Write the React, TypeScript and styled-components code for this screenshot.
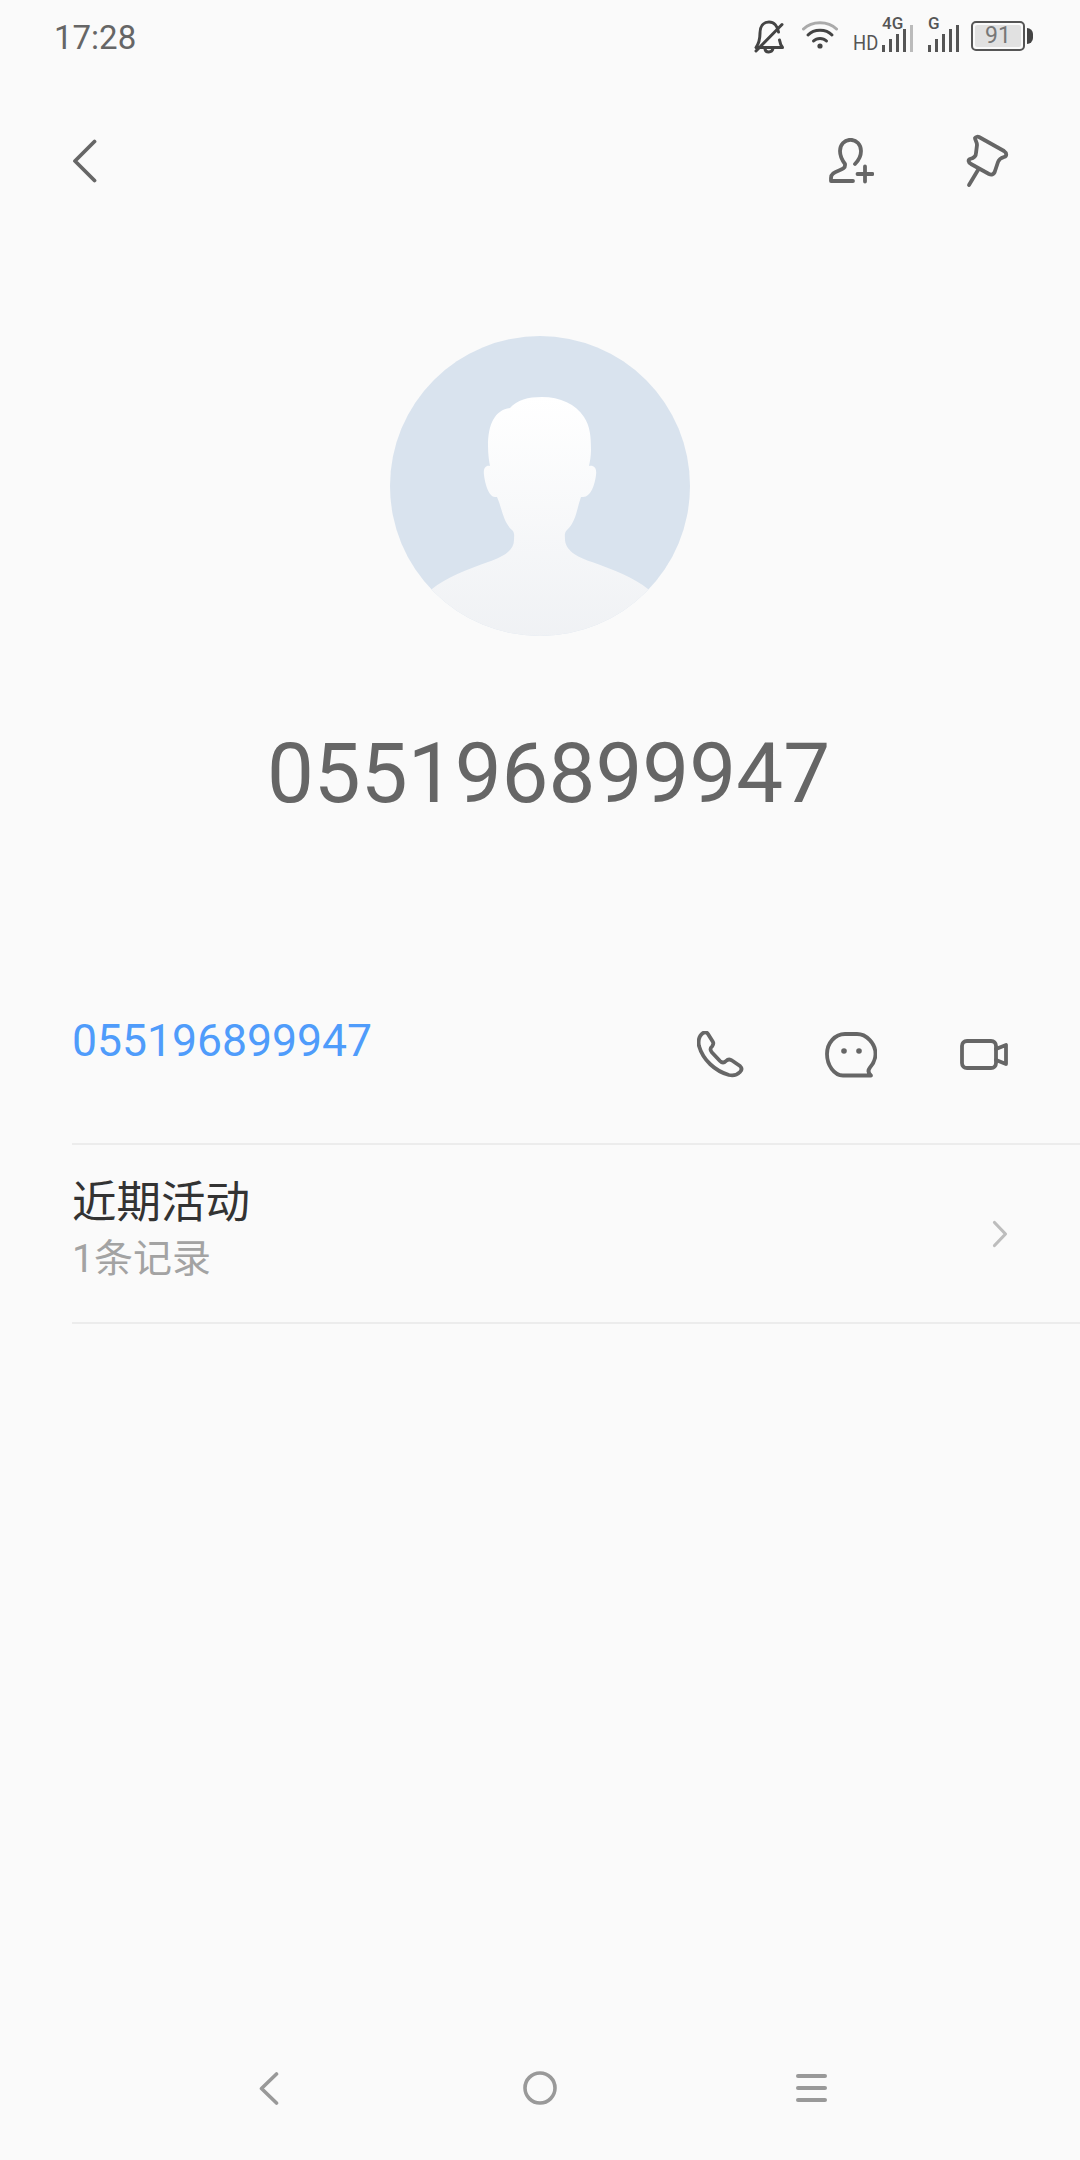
import React from "react";
import { createGlobalStyle, styled } from "styled-components";

const GlobalStyle = createGlobalStyle`
  html, body {
    margin: 0;
    padding: 0;
    background: #fafafa;
  }
  body {
    font-family: Roboto, "Noto Sans CJK SC", sans-serif;
  }
`;

const Page = styled.div`
  width: 1080px;
  height: 2160px;
  display: flex;
  flex-direction: column;
  overflow: hidden;
  background: #fafafa;
`;

const StatusBar = styled.div`
  height: 74px;
  display: flex;
  justify-content: space-between;
  padding: 0 47px 0 54px;
`;

const Clock = styled.div`
  font-size: 33px;
  line-height: 76px;
  color: #666;
`;

const StatusIcons = styled.div`
  display: flex;
  align-items: flex-start;
`;

const Glyph = styled.svg<{ $left: number; $top: number }>`
  display: block;
  flex: none;
  margin-left: ${(p) => p.$left}px;
  margin-top: ${(p) => p.$top}px;
`;

const HdLabel = styled.span`
  margin: 33px 0 0 15px;
  font-size: 20px;
  line-height: 20px;
  width: 23px;
  color: #555;
  transform: scaleX(0.92);
  transform-origin: left;
`;

const Signal = styled.div`
  position: relative;
  margin: 25px 0 0 ${(p: { $left: number }) => p.$left}px;
  width: 32px;
  height: 27px;
`;

const SignalTag = styled.span`
  position: absolute;
  left: 0;
  top: -10px;
  font-size: 17px;
  line-height: 17px;
  font-weight: 500;
  color: #555;
`;

const Battery = styled.div`
  margin: 21px 0 0 11px;
  display: flex;
  align-items: center;
`;

const BatteryShell = styled.div`
  box-sizing: border-box;
  width: 54px;
  height: 30px;
  border: 2px solid #555;
  border-radius: 5px;
  padding: 2px;
`;

const BatteryLevel = styled.div`
  height: 100%;
  background: #e1e1e1;
  border-radius: 2px;
  font-size: 23px;
  line-height: 22px;
  text-align: center;
  color: #777;
`;

const BatteryNub = styled.div`
  width: 6px;
  height: 16px;
  margin-left: 2px;
  background: #444;
  border-radius: 0 8px 8px 0;
`;

const Header = styled.div`
  margin-top: 41px;
  height: 92px;
  display: flex;
  align-items: center;
  padding: 0 70px 0 72px;
`;

const HeaderActions = styled.div`
  margin-left: auto;
  display: flex;
  align-items: center;
  gap: 92px;
`;

const Icon = styled.svg`
  display: block;
  flex: none;
  fill: none;
  stroke: #666;
  stroke-width: 3.8;
  stroke-linecap: round;
  stroke-linejoin: round;
`;

const Hero = styled.div`
  margin-top: 129px;
  display: flex;
  flex-direction: column;
  align-items: center;
`;

const PhoneTitle = styled.div`
  margin-top: 88px;
  padding-left: 17px;
  font-size: 83.5px;
  line-height: 100px;
  color: #666;
`;

const ContactRow = styled.div`
  margin-top: 138px;
  height: 181px;
  display: flex;
  align-items: center;
  padding: 4px 72px 0 72px;
  box-sizing: border-box;
`;

const PhoneLink = styled.div`
  font-size: 44.5px;
  line-height: 52px;
  color: #4f9cfb;
  margin-bottom: 28px;
`;

const ContactActions = styled.div`
  margin-left: auto;
  display: flex;
  align-items: center;
`;

const ActionSlot = styled.div<{ $left: number }>`
  margin-left: ${(p) => p.$left}px;
`;

const ActivityRow = styled.div`
  margin-left: 72px;
  height: 177px;
  display: flex;
  align-items: center;
  padding-right: 72px;
  border-top: 2px solid #ececec;
  border-bottom: 2px solid #ececec;
`;

const ActivityText = styled.div`
  flex: 1;
  margin-top: -9px;
`;

const ActivityTitle = styled.div`
  font-size: 44.5px;
  line-height: 56px;
  color: #333;
  margin-bottom: 3px;
`;

const ActivityMeta = styled.div`
  font-size: 39px;
  line-height: 50px;
  color: #a3a3a3;
`;

const BottomNav = styled.div`
  margin-top: auto;
  height: 144px;
  display: grid;
  grid-template-columns: repeat(3, 271px);
  justify-content: center;
  justify-items: center;
  align-items: center;
`;

function Avatar() {
  return (
    <svg width="300" height="300" viewBox="0 0 300 300">
      <defs>
        <linearGradient id="bust" x1="0" y1="0" x2="0" y2="1">
          <stop offset="0" stopColor="#ffffff" />
          <stop offset="1" stopColor="#eff1f4" />
        </linearGradient>
        <clipPath id="disc">
          <circle cx="150" cy="150" r="150" />
        </clipPath>
      </defs>
      <circle cx="150" cy="150" r="150" fill="#d9e3ee" />
      <path
        clipPath="url(#disc)"
        fill="url(#bust)"
        d="M120 72 C127 64 138 61 152 61 C170 61 186 68 194 81 C200 90 201 100 201 114 C201 120 200 125 199 130 C204 129 207 132 206 139 C205 148 201 161 193 161 L191 161 C187 172 186 186 177 194 C174 197 175 200 175 204 C176 216 190 222 202 226 C222 233 245 242 258 253 L258 310 L42 310 L42 253 C55 242 78 233 98 226 C110 222 124 216 124 204 C124 200 125 197 122 194 C113 186 112 172 107 161 L105 161 C99 161 95 148 94 139 C93 132 96 129 100 130 C99 125 98 118 98 110 C98 88 105 74 120 72 Z"
      />
    </svg>
  );
}

export default function App() {
  return (
    <Page>
      <GlobalStyle />
      <StatusBar>
        <Clock>17:28</Clock>
        <StatusIcons>
          <Glyph $left={0} $top={20} width="31" height="34" viewBox="0 0 31 34" fill="none" stroke="#444" strokeWidth="3" strokeLinecap="round" strokeLinejoin="round">
            <path d="M24.5 12 C23.5 6 20 2 15 2 C9 2 6 7 6 13 C6 19 4.5 24 2 27.5 H28.5 C27 25.5 26 23 25.5 20" />
            <path d="M28 4.5 L2 31" />
            <path d="M11 29 C11.5 33 18 33 19 28.5" />
          </Glyph>
          <Glyph $left={17} $top={21} width="36" height="28" viewBox="0 0 36 28" fill="none" strokeWidth="3" strokeLinecap="round">
            <path d="M1.5 8 C10 -0.5 26 -0.5 34.5 8" stroke="#aaa" />
            <path d="M6 14 C12 7.5 24 7.5 30 14" stroke="#444" />
            <path d="M11.5 20 C15 16.5 21 16.5 24.5 20" stroke="#444" />
            <circle cx="18" cy="25" r="2.6" fill="#444" stroke="none" />
          </Glyph>
          <HdLabel>HD</HdLabel>
          <Signal $left={6}>
            <SignalTag>4G</SignalTag>
            <svg width="32" height="27" viewBox="0 0 32 27" style={{ display: "block" }}>
              <rect x="0" y="20" width="3" height="7" fill="#555" />
              <rect x="7" y="14" width="3" height="13" fill="#555" />
              <rect x="14" y="9" width="3" height="18" fill="#555" />
              <rect x="21" y="4" width="3" height="23" fill="#555" />
              <rect x="28" y="0" width="3" height="27" fill="#bbb" />
            </svg>
          </Signal>
          <Signal $left={14}>
            <SignalTag>G</SignalTag>
            <svg width="32" height="27" viewBox="0 0 32 27" style={{ display: "block" }}>
              <rect x="0" y="20" width="3" height="7" fill="#555" />
              <rect x="7" y="14" width="3" height="13" fill="#555" />
              <rect x="14" y="9" width="3" height="18" fill="#555" />
              <rect x="21" y="4" width="3" height="23" fill="#555" />
              <rect x="28" y="0" width="3" height="27" fill="#555" />
            </svg>
          </Signal>
          <Battery>
            <BatteryShell>
              <BatteryLevel>91</BatteryLevel>
            </BatteryShell>
            <BatteryNub />
          </Battery>
        </StatusIcons>
      </StatusBar>

      <Header>
        <Icon width="25" height="44" viewBox="0 0 25 44">
          <path d="M22.5 2.5 L3 22 L22.5 41.5" />
        </Icon>
        <HeaderActions>
          <Icon width="45" height="46" viewBox="0 0 45 46">
            <path d="M26 26 C29 23 32 18.5 32 13 C32 6.5 27.5 1.8 21.5 1.8 C15.5 1.8 11 6.5 11 13 C11 18 13 22 16 26 C16.5 30 14 31 10 32.5 C5 34.5 2 36 2 40 V43 H24" />
            <path d="M36 28.5 V43.5 M28.5 36 H43.5" />
          </Icon>
          <Icon width="44" height="54" viewBox="0 0 44 54">
            <path d="M9 4 C10 2.5 12 2.5 13 3 L38 17 C41 19 41 22 38 23 C35 24 33 25 32 28 L29 37 C28 41 25 41 23 40 L5 30 C2 28 2 26 4 25 C8 24 10 22 10 19 L11 11 C11 8 9 6 9 4 Z" />
            <path d="M12 36 L3 51" />
          </Icon>
        </HeaderActions>
      </Header>

      <Hero>
        <Avatar />
        <PhoneTitle>055196899947</PhoneTitle>
      </Hero>

      <ContactRow>
        <PhoneLink>055196899947</PhoneLink>
        <ContactActions>
          <ActionSlot $left={0}>
            <Icon width="47" height="47" viewBox="0 0 47 47">
              <path d="M6 2 C8 1 10 1.5 11 3 L16 11 C17 13 16 14 15 15.5 C13 17 13 19 15 21.5 L23 30 C25 32 27 32 29 30 C31 28 33 28 35 29.5 L43 35 C45 37 45 39 43 41 C40 44 36 45 32 44 C18 40 6 29 2 15 C1 10 2 5 6 2 Z" />
            </Icon>
          </ActionSlot>
          <ActionSlot $left={81}>
            <Icon width="52" height="46" viewBox="0 0 52 46">
              <path d="M18 43.5 H46 C43 41 43 38 45 35.5 C49 31 50.5 27 50.5 22 C50.5 11 41 2 32 2 H20 C10 2 2 11 2 22 C2 33 9 43.5 18 43.5 Z" />
              <circle cx="19" cy="19" r="2.8" fill="#666" stroke="none" />
              <circle cx="34" cy="19" r="2.8" fill="#666" stroke="none" />
            </Icon>
          </ActionSlot>
          <ActionSlot $left={83}>
            <Icon width="48" height="31" viewBox="0 0 48 31">
              <path d="M7 2 H31 C34 2 36 4 36 7 V24 C36 27 34 29 31 29 H7 C4 29 2 27 2 24 V7 C2 4 4 2 7 2 Z" />
              <path d="M36 10 L46 6 V25 L36 21" />
            </Icon>
          </ActionSlot>
        </ContactActions>
      </ContactRow>

      <ActivityRow>
        <ActivityText>
          <ActivityTitle>近期活动</ActivityTitle>
          <ActivityMeta>1条记录</ActivityMeta>
        </ActivityText>
        <Icon width="16" height="28" viewBox="0 0 16 28" style={{ stroke: "#bdbdbd", strokeWidth: 3.2 }}>
          <path d="M2.5 2.5 L13.5 14 L2.5 25.5" />
        </Icon>
      </ActivityRow>

      <BottomNav>
        <Icon width="20" height="33" viewBox="0 0 20 33" style={{ stroke: "#999", strokeWidth: 3.6 }}>
          <path d="M17.5 2 L2.5 16.5 L17.5 31" />
        </Icon>
        <Icon width="34" height="34" viewBox="0 0 34 34" style={{ stroke: "#999", strokeWidth: 3.6 }}>
          <circle cx="17" cy="17" r="15" />
        </Icon>
        <Icon width="31" height="28" viewBox="0 0 31 28" style={{ stroke: "#999", strokeWidth: 4 }}>
          <path d="M2 2 H29 M2 14 H29 M2 26 H29" />
        </Icon>
      </BottomNav>
    </Page>
  );
}
